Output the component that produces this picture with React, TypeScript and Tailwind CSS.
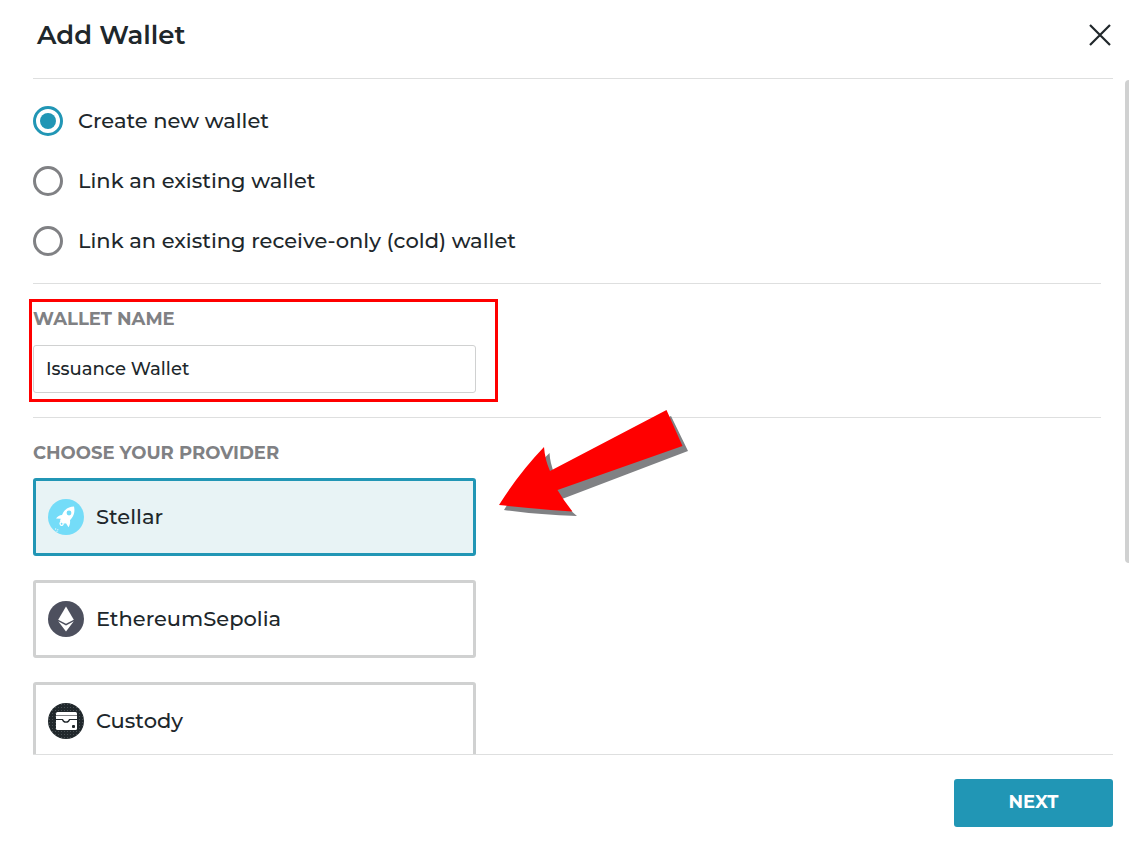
import { useState, type ReactNode } from 'react'

const modes = [
  { id: 'create', label: 'Create new wallet' },
  { id: 'link', label: 'Link an existing wallet' },
  { id: 'cold', label: 'Link an existing receive-only (cold) wallet' },
]

function StellarIcon() {
  return (
    <svg viewBox="0 0 36 36" className="size-9 shrink-0" aria-hidden="true">
      <circle cx="18" cy="18" r="18" fill="#74dcf8" />
      <path
        d="M26 7.500c-4.500.3-8.200 2-10.500 5.500l-1.500 3c-2.400.2-4.300 1.300-6 3.500l4.700.3-.7 2.200 2.500 2.500c1.600-.1 2.600 0 3.500-.3l2.500 4c1.300-2 1.900-4.300 1.500-7l1.800-2.200c2.500-3.300 3.200-7 2.200-11.500z"
        fill="#fff"
      />
      <circle cx="21" cy="14" r="2.400" fill="#74dcf8" />
      <path d="M14.500 22.500c-1.800-.2-3 1.500-2.200 3s3 1 3-1.200" fill="none" stroke="#fff" strokeWidth="1.300" />
      <path d="M7 30h1.200M9.300 30.800h1M8.500 32.300h1" stroke="#fff" strokeWidth="1" />
    </svg>
  )
}

function EthereumIcon() {
  return (
    <svg viewBox="0 0 36 36" className="size-9 shrink-0" aria-hidden="true">
      <circle cx="18" cy="18" r="18" fill="#4d505e" />
      <path d="M18 5.500l7.800 13.200L18 22.800l-7.800-4.100z" fill="#fff" />
      <path d="M10.200 20.200l7.800 4.200 7.800-4.200L18 30.500z" fill="#fff" />
    </svg>
  )
}

function CustodyIcon() {
  return (
    <svg viewBox="0 0 36 36" className="size-9 shrink-0" aria-hidden="true">
      <defs>
        <pattern id="dots" width="3" height="3" patternUnits="userSpaceOnUse">
          <rect width="3" height="3" fill="#20272b" />
          <rect x="1" y="1" width="1" height="1" fill="#485054" />
        </pattern>
      </defs>
      <circle cx="18" cy="18" r="18" fill="url(#dots)" />
      <rect x="8" y="9" width="21" height="18" rx="1.500" fill="#fff" />
      <path d="M8 12.500h21" stroke="#808184" strokeWidth="1" />
      <path d="M7 16.500h7.500c.8 3.500 6.200 3.500 7 0h8" fill="none" stroke="#20272b" strokeWidth="1.200" />
      <rect x="24" y="22" width="3" height="3" rx="1" fill="#20272b" />
    </svg>
  )
}

const providers: { id: string; label: string; icon: ReactNode }[] = [
  { id: 'stellar', label: 'Stellar', icon: <StellarIcon /> },
  { id: 'ethereum', label: 'EthereumSepolia', icon: <EthereumIcon /> },
  { id: 'custody', label: 'Custody', icon: <CustodyIcon /> },
]

function Arrow() {
  return (
    <svg viewBox="0 0 190 108" className="absolute -top-[9px] left-[466px] h-[108px] w-[190px]" aria-hidden="true">
      <path d="M5 101Q25 68 50.500 44Q51 54 55.500 65L172 7L189 42L63 90Q69 100 78 107Q40 106 5 101z" fill="#808184" />
      <path d="M0 96Q20 64 45 38Q46 51 51 62L167.500 1L183.500 37L58.500 81Q65 92 73.500 102.500Q37 100 0 96z" fill="#ff0000" />
    </svg>
  )
}

export default function App() {
  const [mode, setMode] = useState('create')
  const [name, setName] = useState('Issuance Wallet')
  const [provider, setProvider] = useState('stellar')

  return (
    <div className="flex h-screen flex-col bg-white font-['Montserrat','Inter',sans-serif] text-[#20272b]">
      <header className="mr-4 ml-[33px] flex h-[79px] shrink-0 items-start justify-between border-b border-[#dedfdf] pt-[19px] pl-1">
        <h1 className="text-[26px] leading-8 font-semibold">Add Wallet</h1>
        <button type="button" aria-label="Close" className="mt-[5px] mr-0.5">
          <svg viewBox="0 0 22 22" className="size-[22px]" fill="none" stroke="currentColor" strokeWidth="2.200">
            <path d="M1 1l20 20M21 1L1 21" />
          </svg>
        </button>
      </header>

      <main className="relative min-h-0 flex-1 overflow-hidden pr-7 pl-[33px]">
        <fieldset className="flex flex-col gap-[30px] border-b border-[#dedfdf] py-[27px]">
          {modes.map((m) => (
            <label key={m.id} className="flex h-[30px] items-center gap-[15px] text-[21px] font-medium">
              <input
                type="radio"
                name="mode"
                checked={mode === m.id}
                onChange={() => setMode(m.id)}
                className="size-[30px] shrink-0 appearance-none rounded-full border-3 border-[#808184] bg-clip-content p-1 checked:border-[#2196b5] checked:bg-[#2196b5]"
              />
              {m.label}
            </label>
          ))}
        </fieldset>

        <section className="relative border-b border-[#dedfdf] pt-[23px] pb-6">
          <label htmlFor="wallet-name" className="block text-[18px] leading-6 font-bold text-[#808184]">
            WALLET NAME
          </label>
          <input
            id="wallet-name"
            type="text"
            value={name}
            onChange={(e) => setName(e.target.value)}
            className="mt-3.5 block h-12 w-full max-w-[443px] rounded-[3px] border border-[#d0d1d1] px-3 text-[18px] font-medium"
          />
          <div className="pointer-events-none absolute top-[15px] -left-1 h-[103px] w-[469px] border-3 border-[#ff0000]" />
        </section>

        <section className="relative pt-[23px] pb-6">
          <h2 className="text-[18px] leading-6 font-bold text-[#808184]">CHOOSE YOUR PROVIDER</h2>
          <div className="mt-[13px] flex max-w-[443px] flex-col gap-6">
            {providers.map((p) => (
              <button
                key={p.id}
                type="button"
                aria-pressed={provider === p.id}
                onClick={() => setProvider(p.id)}
                className="flex h-[78px] items-center gap-3 rounded-[3px] border-3 border-[#d0d1d1] px-3 text-[21px] font-medium aria-pressed:border-[#2196b5] aria-pressed:bg-[#e8f3f5]"
              >
                {p.icon}
                {p.label}
              </button>
            ))}
          </div>
          <Arrow />
        </section>

        {/* scroll thumb */}
        <div className="absolute top-px right-0 h-[71.5%] w-1 rounded-l bg-[#d0d1d1]" />
      </main>

      <footer className="mr-4 ml-[33px] flex shrink-0 justify-end border-t border-[#dedfdf] pt-6 pb-4">
        <button type="button" className="h-12 w-[159px] rounded-[3px] bg-[#2196b5] pb-0.5 text-[18px] font-bold text-white">
          NEXT
        </button>
      </footer>
    </div>
  )
}
